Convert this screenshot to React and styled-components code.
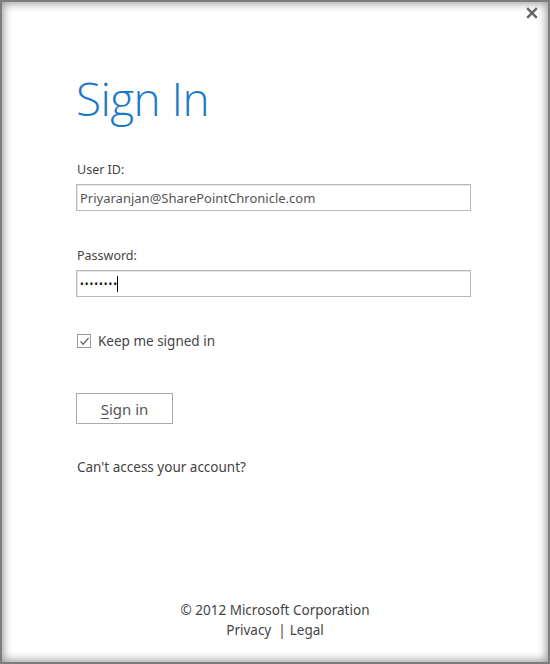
import styled, { createGlobalStyle } from "styled-components"

const Global = createGlobalStyle`
   html, body {
      margin: 0;
      padding: 0;
      background: #ffffff;
   }
   body {
      font-family: "Noto Sans", "Open Sans", sans-serif;
      color: #444;
   }
`

const Frame = styled.div`
   position: relative;
   width: 550px;
   height: 664px;
   box-sizing: border-box;
   background: #fff;
   box-shadow: inset 0 0 0 2px #7d7d7d, inset 0 0 8px 4px rgba(0, 0, 0, 0.38);
   display: flex;
   flex-direction: column;
   padding: 0 0 0 76px;
`

const Close = styled.button`
   position: absolute;
   top: 7px;
   right: 12px;
   width: 12px;
   height: 12px;
   padding: 0;
   border: 0;
   background: transparent;
   display: flex;
   align-items: center;
   justify-content: center;
`

const Title = styled.h1`
   margin: 70px 0 0 0;
   font-family: "Open Sans", sans-serif;
   font-weight: 300;
   font-size: 46px;
   line-height: 56px;
   color: #1c79c9;
   letter-spacing: -0.6px;
`

const Field = styled.div`
   display: flex;
   flex-direction: column;
   margin-top: ${({ top }) => top}px;
`

const Label = styled.label`
   font-size: 12.5px;
   line-height: 18px;
   color: #444;
   margin-bottom: 5px;
   padding-left: 1px;
`

const Input = styled.div`
   width: 395px;
   height: 27px;
   box-sizing: border-box;
   border: 1px solid #b9b9b9;
   background: #fff;
   display: flex;
   align-items: center;
   padding: 0 3px;
   font-size: 13px;
   color: #555;
   box-shadow: inset 1px 1px 0 #e6e6e6;
`

const Dots = styled.span`
   font-size: 10px;
   letter-spacing: 1px;
   color: #111;
   line-height: 1;
`

const Caret = styled.span`
   display: inline-block;
   width: 1px;
   height: 16px;
   background: #000;
   margin-left: -1px;
`

const CheckRow = styled.label`
   display: flex;
   align-items: center;
   gap: 7px;
   margin-top: 35px;
   font-size: 13.5px;
   color: #444;
`

const Box = styled.span`
   width: 14px;
   height: 14px;
   box-sizing: border-box;
   border: 1px solid #9a9a9a;
   display: flex;
   align-items: center;
   justify-content: center;
   margin-left: 1px;
`

const Button = styled.button`
   margin-top: 43px;
   width: 97px;
   height: 31px;
   box-sizing: border-box;
   border: 1px solid #ababab;
   background: #fff;
   font-family: "Noto Sans", sans-serif;
   font-size: 15px;
   color: #555;
   padding: 0;
   span {
      text-decoration: underline;
      text-underline-offset: 3px;
      text-decoration-thickness: 1px;
   }
`

const Help = styled.a`
   margin-top: 34px;
   font-size: 13.5px;
   color: #444;
   padding-left: 1px;
`

const Footer = styled.footer`
   margin-top: auto;
   margin-left: -76px;
   padding-bottom: 24px;
   display: flex;
   flex-direction: column;
   align-items: center;
   font-size: 13.5px;
   line-height: 20px;
   color: #444;
`

const Links = styled.div`
   display: flex;
   span {
      margin: 0 4px 0 7px;
   }
`

const App = () => {
   return (
      <>
         <Global />
         <Frame>
            <Close aria-label="Close">
               <svg width="12" height="12" viewBox="0 0 12 12">
                  <path d="M1.2 1.2 L10.8 10.8 M10.8 1.2 L1.2 10.8" stroke="#666" strokeWidth="2.4" />
               </svg>
            </Close>
            <Title>Sign In</Title>
            <Field top={35}>
               <Label>User ID:</Label>
               <Input>Priyaranjan@SharePointChronicle.com</Input>
            </Field>
            <Field top={36}>
               <Label>Password:</Label>
               <Input>
                  <Dots>••••••••</Dots>
                  <Caret />
               </Input>
            </Field>
            <CheckRow>
               <Box>
                  <svg width="11" height="11" viewBox="0 0 11 11">
                     <path d="M1.5 5.5 L4.2 8.3 L9.5 2" stroke="#666" strokeWidth="1.3" fill="none" />
                  </svg>
               </Box>
               Keep me signed in
            </CheckRow>
            <Button>
               <span>S</span>ign in
            </Button>
            <Help>Can't access your account?</Help>
            <Footer>
               <div>© 2012 Microsoft Corporation</div>
               <Links>
                  Privacy<span>|</span>Legal
               </Links>
            </Footer>
         </Frame>
      </>
   )
}

export default App
